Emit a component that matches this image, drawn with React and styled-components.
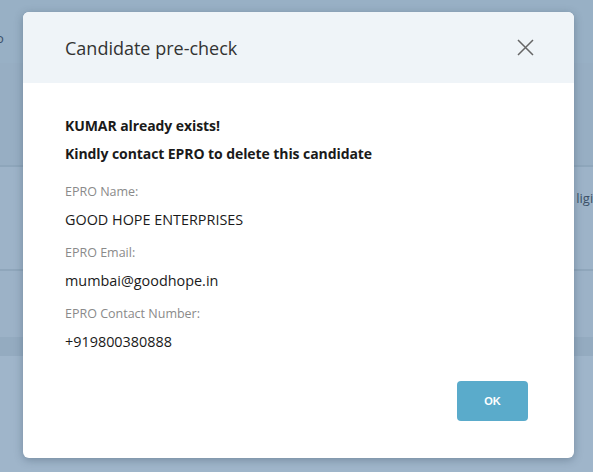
import React from 'react';
import styled, { createGlobalStyle } from 'styled-components';

const GlobalStyle = createGlobalStyle`
  html, body {
    margin: 0;
    padding: 0;
    width: 593px;
    height: 472px;
    overflow: hidden;
    font-family: "Open Sans", "Noto Sans", sans-serif;
  }
`;

const Page = styled.div`
  position: relative;
  width: 593px;
  height: 472px;
  display: flex;
  flex-direction: column;
  background: #9fb5ca;
`;

const Band = styled.div`
  height: ${(p) => p.h}px;
  background: ${(p) => p.bg};
  border-bottom: ${(p) => (p.line ? `2px solid ${p.line}` : 'none')};
  display: flex;
  align-items: center;
  justify-content: space-between;
  font-size: 13px;
  color: #2a3f57;
  box-sizing: border-box;
  overflow: hidden;
`;

const BgText = styled.span`
  opacity: 0.85;
  white-space: nowrap;
  margin: ${(p) => p.m || '0'};
`;

const Overlay = styled.div`
  position: absolute;
  inset: 0;
  display: flex;
  justify-content: center;
  padding-top: 12px;
`;

const Modal = styled.div`
  width: 551px;
  height: 446px;
  margin-left: 4px;
  background: #fff;
  border-radius: 6px;
  box-shadow: 0 2px 8px rgba(40, 60, 80, 0.35);
  display: flex;
  flex-direction: column;
  overflow: hidden;
`;

const Header = styled.div`
  height: 71px;
  background: #eff4f8;
  display: flex;
  align-items: center;
  justify-content: space-between;
  padding: 0 40px 0 42px;
  box-sizing: border-box;
`;

const Title = styled.h4`
  margin: 0;
  font-size: 18px;
  font-weight: 400;
  color: #333;
`;

const CloseButton = styled.button`
  border: none;
  background: none;
  padding: 0;
  width: 17px;
  height: 17px;
  display: flex;
  cursor: pointer;
`;

const Body = styled.div`
  flex: 1;
  padding: 29px 42px 0;
  display: flex;
  flex-direction: column;
`;

const Strong = styled.p`
  margin: 0;
  font-size: 14px;
  font-weight: 700;
  color: #1a1a1a;
  line-height: 28px;
  letter-spacing: -0.08px;
`;

const Details = styled.dl`
  margin: 15px 0 0;
`;

const Label = styled.dt`
  font-size: 12.5px;
  color: #8a8a8a;
  line-height: 18px;
`;

const Value = styled.dd`
  margin: 0;
  font-size: 14.4px;
  color: #1a1a1a;
  line-height: 24px;
  padding: 7px 0 12px;
`;

const Footer = styled.div`
  display: flex;
  justify-content: flex-end;
  padding: 0 46px 37px;
`;

const OkButton = styled.button`
  width: 71px;
  height: 40px;
  border: none;
  border-radius: 4px;
  background: #5aabcb;
  color: #fff;
  font-family: "Liberation Sans", Arial, sans-serif;
  font-weight: 700;
  font-size: 11px;
  cursor: pointer;
`;

const details = [
  ['EPRO Name:', 'GOOD HOPE ENTERPRISES'],
  ['EPRO Email:', 'mumbai@goodhope.in'],
  ['EPRO Contact Number:', '+919800380888'],
];

export default function App() {
  return (
    <>
      <GlobalStyle />
      <Page>
        <Band h={63} bg="#98b0c5">
          <BgText m="0 0 -12px -4px">o</BgText>
        </Band>
        <Band h={104} bg="#97aec3" line="#8ea6bb" />
        <Band h={104} bg="#9db3c8" line="#8fa6bb">
          <span />
          <BgText m="0 -8px 40px 0">ligio</BgText>
        </Band>
        <Band h={66} bg="#9cb2c7" />
        <Band h={19} bg="#94abc0" />
        <Overlay>
          <Modal>
            <Header>
              <Title>Candidate pre-check</Title>
              <CloseButton aria-label="Close">
                <svg width="17" height="17" viewBox="0 0 17 17">
                  <path d="M1 1L16 16M16 1L1 16" stroke="#666" strokeWidth="1.5" fill="none" />
                </svg>
              </CloseButton>
            </Header>
            <Body>
              <Strong>KUMAR already exists!</Strong>
              <Strong>Kindly contact EPRO to delete this candidate</Strong>
              <Details>
                {details.map(([label, value]) => (
                  <React.Fragment key={label}>
                    <Label>{label}</Label>
                    <Value>{value}</Value>
                  </React.Fragment>
                ))}
              </Details>
            </Body>
            <Footer>
              <OkButton>OK</OkButton>
            </Footer>
          </Modal>
        </Overlay>
      </Page>
    </>
  );
}
